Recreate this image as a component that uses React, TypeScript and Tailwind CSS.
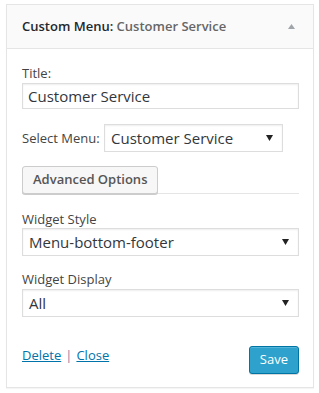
const font = { fontFamily: '"Open Sans", "Liberation Sans", sans-serif' };

function Arrow() {
  return (
    <svg width="7" height="6" viewBox="0 0 7 6" className="shrink-0">
      <path d="M0 0h7L3.5 6z" fill="#222" />
    </svg>
  );
}

function FakeSelect({ value, className = '' }: { value: string; className?: string }) {
  return (
    <div
      className={`flex items-center justify-between border border-[#ddd] bg-white pl-[6px] pr-[9px] text-[15px] text-[#32373c] shadow-[inset_0_1px_2px_rgba(0,0,0,0.07)] ${className}`}
    >
      <span className="leading-none">{value}</span>
      <Arrow />
    </div>
  );
}

export default function App() {
  return (
    <div className="w-[319px] h-[393px] bg-white pt-[4px] pl-[6px]" style={font}>
      <div className="w-[308px] border border-[#e5e5e5] bg-white shadow-[0_1px_1px_rgba(0,0,0,0.04)]">
        {/* Header */}
        <div className="flex h-[44px] items-center justify-between border-b border-[#e5e5e5] bg-[#fafafa] pl-[15px] pr-[18px]">
          <h3 className="text-[13px] font-semibold text-[#23282d]">
            Custom Menu: <span className="text-[#666]">Customer Service</span>
          </h3>
          <svg width="7" height="5" viewBox="0 0 7 5">
            <path d="M3.5 0L7 5H0z" fill="#a0a5aa" />
          </svg>
        </div>

        {/* Body */}
        <div className="px-[15px] pt-[15px] pb-[13px] text-[13px] text-[#444]">
          <label className="block leading-[18px]">Title:</label>
          <div className="mt-[1px] flex h-[26px] w-[277px] items-center border border-[#ddd] pl-[5px] text-[15px] text-[#32373c] shadow-[inset_0_1px_2px_rgba(0,0,0,0.07)]">
            Customer Service
          </div>

          <div className="mt-[15px] flex items-center">
            <span className="w-[82px] leading-[18px]">Select Menu:</span>
            <FakeSelect value="Customer Service" className="h-[28px] w-[179px]" />
          </div>

          <div className="mt-[14px] flex w-[277px] border-b border-[#e5e5e5]">
            <button className="-mb-px h-[28px] rounded-[3px] border border-[#ccc] bg-[#f7f7f7] px-[10px] text-[13px] font-semibold text-[#555] shadow-[0_1px_0_#ccc]">
              Advanced Options
            </button>
          </div>

          <label className="mt-[16px] block leading-[18px]">Widget Style</label>
          <FakeSelect value="Menu-bottom-footer" className="h-[28px] w-[277px]" />

          <label className="mt-[14px] block leading-[18px]">Widget Display</label>
          <FakeSelect value="All" className="mt-[1px] h-[28px] w-[277px]" />

          <div className="mt-[29px] flex w-[277px] items-center justify-between">
            <div className="-mt-[8px] text-[13px]">
              <a href="#" className="text-[#0073aa] underline">Delete</a>
              <span className="mx-[4px] text-[#8a7ea6]">|</span>
              <a href="#" className="text-[#0073aa] underline">Close</a>
            </div>
            <button className="h-[28px] rounded-[3px] border border-[#0074a2] bg-[#2ea2cc] px-[10px] text-[13px] text-white shadow-[inset_0_1px_0_rgba(120,200,230,0.5),0_1px_0_rgba(0,0,0,0.15)]">
              Save
            </button>
          </div>
        </div>
      </div>
    </div>
  );
}
